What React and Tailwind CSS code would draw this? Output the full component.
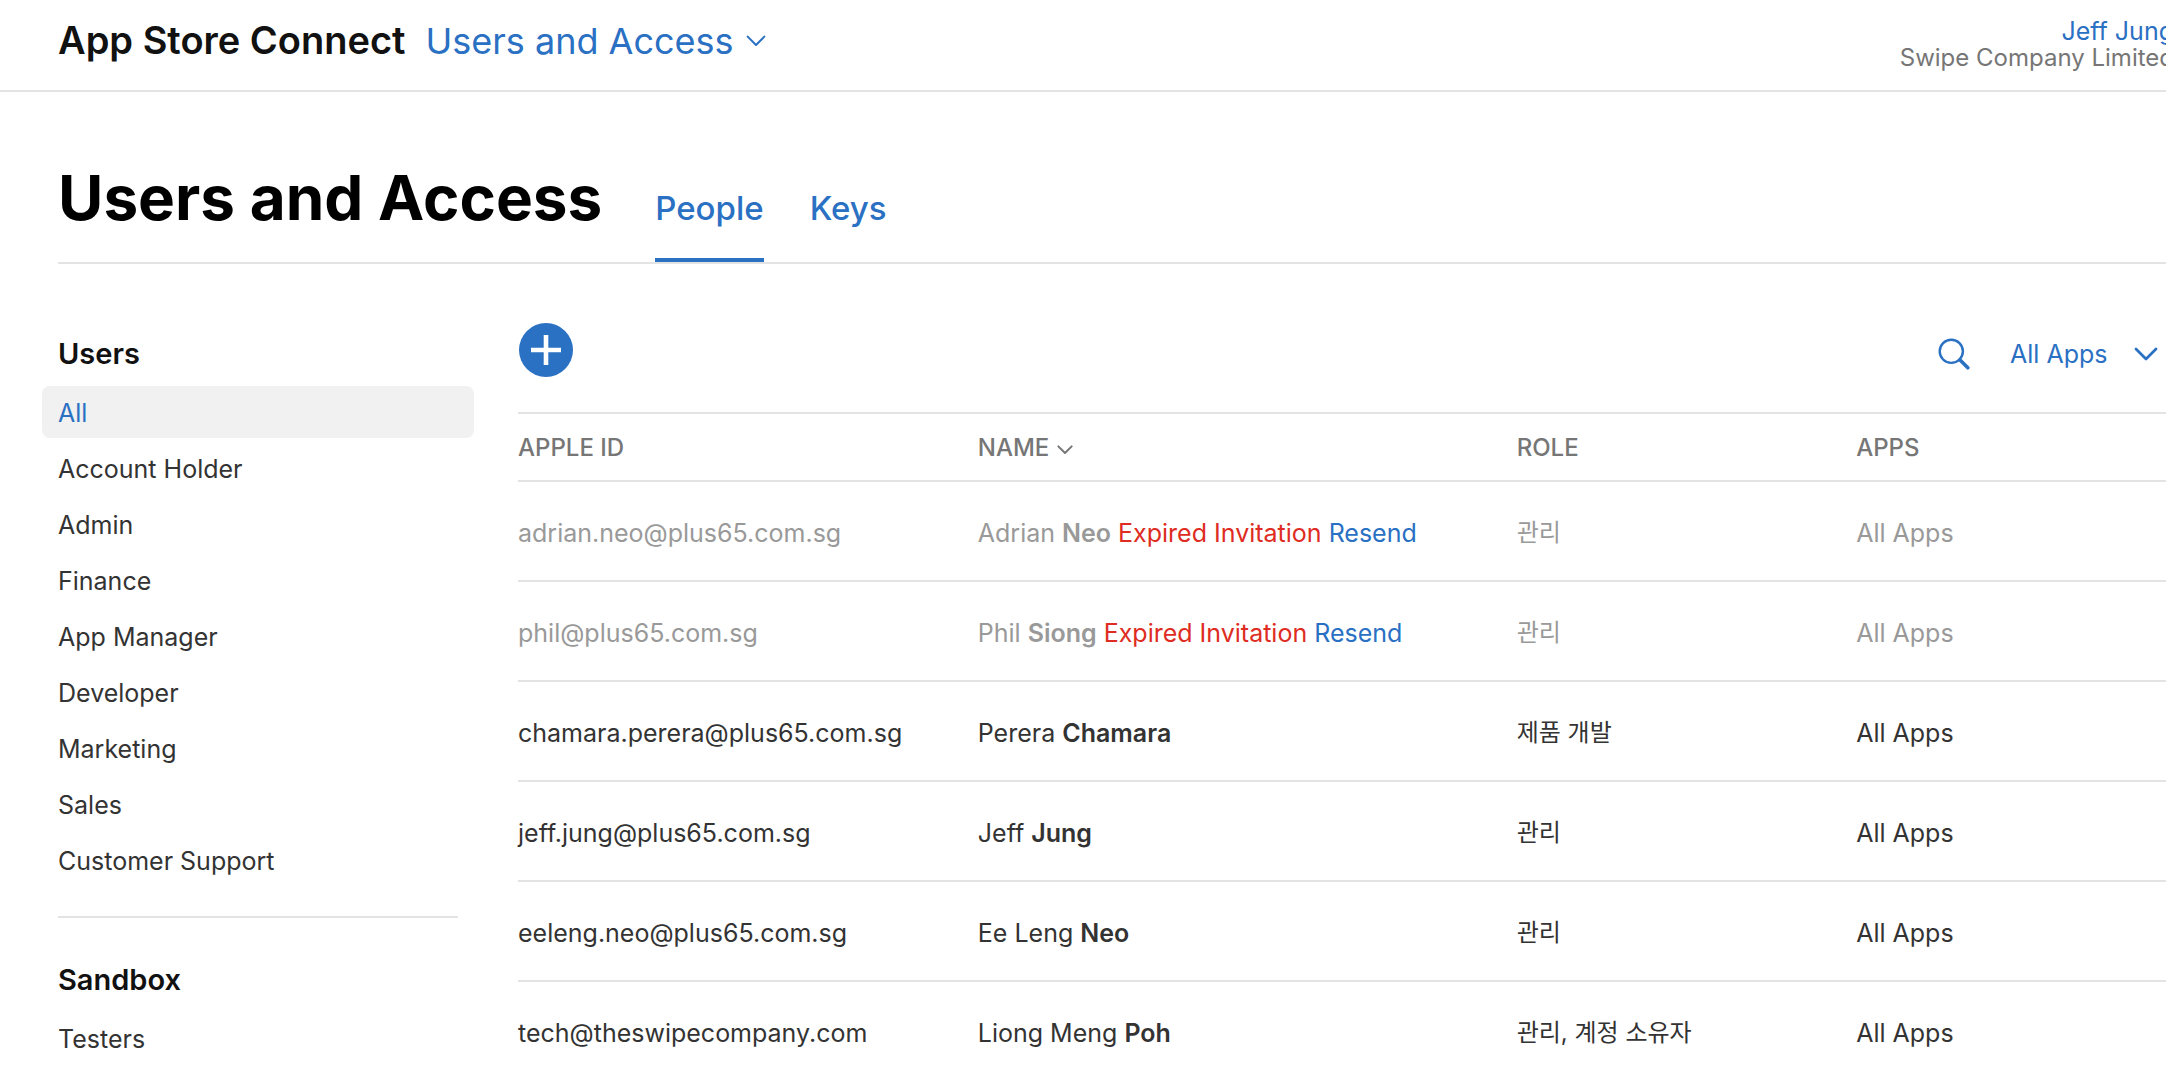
import { useState } from "react";

const roles = ["All", "Account Holder", "Admin", "Finance", "App Manager", "Developer", "Marketing", "Sales", "Customer Support"];

const people = [
  { email: "adrian.neo@plus65.com.sg", first: "Adrian", last: "Neo", expired: true, role: "관리" },
  { email: "phil@plus65.com.sg", first: "Phil", last: "Siong", expired: true, role: "관리" },
  { email: "chamara.perera@plus65.com.sg", first: "Perera", last: "Chamara", role: "제품 개발" },
  { email: "jeff.jung@plus65.com.sg", first: "Jeff", last: "Jung", role: "관리" },
  { email: "eeleng.neo@plus65.com.sg", first: "Ee Leng", last: "Neo", role: "관리" },
  { email: "tech@theswipecompany.com", first: "Liong Meng", last: "Poh", role: "관리, 계정 소유자" },
];

function Chevron({ className, strokeWidth = 2 }) {
  return (
    <svg className={className} viewBox="0 0 24 14" fill="none" stroke="currentColor" strokeWidth={strokeWidth} strokeLinecap="round" strokeLinejoin="round" aria-hidden="true">
      <path d="M2 2l10 10L22 2" />
    </svg>
  );
}

function Header() {
  return (
    <header className="flex h-[92px] items-center justify-between border-b-2 border-[#e3e3e3] pb-2 pl-[58px] whitespace-nowrap">
      <div className="flex items-baseline gap-5 pb-0.5 text-[38px] leading-12">
        <a href="#home" className="font-semibold text-[#111]">App Store Connect</a>
        <button type="button" className="flex items-center gap-3 text-[36px] text-[#2a70c3]">
          Users and Access
          <Chevron className="w-5" strokeWidth={2.4} />
        </button>
      </div>
      <div className="-mr-2 flex flex-col items-end pt-1.5">
        <button type="button" className="text-[25px] leading-7 text-[#2a70c3]">Jeff Jung</button>
        <span className="text-[24px] leading-[26px] text-[#767676]">Swipe Company Limited</span>
      </div>
    </header>
  );
}

function Sidebar({ selected, onSelect }) {
  return (
    <nav className="w-[432px] shrink-0 text-[25px] leading-8 text-[#333]">
      <h2 className="px-4 pt-2.5 pb-3.5 text-[29px] leading-9 font-semibold text-[#111]">Users</h2>
      <ul className="flex flex-col gap-1">
        {roles.map((role) => (
          <li key={role}>
            <button
              type="button"
              onClick={() => onSelect(role)}
              className={`flex h-[52px] w-full items-center rounded-lg px-4 pt-0.5 ${role === selected ? "bg-[#f1f1f1] text-[#2a70c3]" : ""}`}
            >
              {role}
            </button>
          </li>
        ))}
      </ul>
      <hr className="mx-4 mt-[30px] border-t-2 border-[#e3e3e3]" />
      <h2 className="px-4 pt-11 pb-3.5 text-[29px] leading-9 font-semibold text-[#111]">Sandbox</h2>
      <button type="button" className="flex h-[52px] w-full items-center px-4 pt-0.5">Testers</button>
    </nav>
  );
}

function Toolbar() {
  return (
    <div className="flex items-start justify-between pr-2">
      <button type="button" aria-label="Add user" className="ml-px flex size-[54px] items-center justify-center rounded-full bg-[#2a70c3] text-white">
        <svg className="size-[30px]" viewBox="0 0 30 30" stroke="currentColor" strokeWidth="4.6" aria-hidden="true">
          <path d="M15 0v30M0 15h30" />
        </svg>
      </button>
      <div className="mt-2 flex h-[46px] items-center text-[#2a70c3]">
        <button type="button" aria-label="Search" className="mr-10">
          <svg className="size-8" viewBox="0 0 32 32" fill="none" stroke="currentColor" strokeLinecap="round" aria-hidden="true">
            <circle cx="13.3" cy="13.3" r="11.6" strokeWidth="2.4" />
            <path d="M21.8 21.8l8 8" strokeWidth="3.6" />
          </svg>
        </button>
        <select aria-label="Filter by app" className="mr-[26px] appearance-none bg-transparent text-[25px] leading-8">
          <option>All Apps</option>
        </select>
        <Chevron className="w-6" strokeWidth={2.8} />
      </div>
    </div>
  );
}

function PeopleTable() {
  return (
    <table className="mt-[35px] w-full table-fixed border-collapse text-left text-[25px] leading-8 whitespace-nowrap text-[#333]">
      <colgroup>
        <col className="w-[27.9%]" />
        <col className="w-[32.7%]" />
        <col className="w-[20.6%]" />
        <col />
      </colgroup>
      <thead>
        <tr className="h-[68px] border-y-2 border-[#e3e3e3] text-[24px] text-[#767676]">
          <th className="pt-0.5 font-medium">APPLE ID</th>
          <th className="pt-0.5 font-medium">
            <button type="button" className="flex items-center gap-2">
              NAME
              <Chevron className="mt-1 w-4" strokeWidth={3} />
            </button>
          </th>
          <th className="pt-0.5 font-medium">ROLE</th>
          <th className="pt-0.5 font-medium">APPS</th>
        </tr>
      </thead>
      <tbody>
        {people.map((p) => (
          <tr key={p.email} className={`h-[100px] border-b-2 border-[#e3e3e3] ${p.expired ? "text-[#999]" : ""}`}>
            <td className="pt-1">{p.email}</td>
            <td className="pt-1">
              {p.first} <span className="font-semibold">{p.last}</span>
              {p.expired && (
                <>
                  {" "}
                  <span className="text-[#de2c22]">Expired Invitation</span>{" "}
                  <a href="#resend" className="text-[#2a70c3]">Resend</a>
                </>
              )}
            </td>
            <td className="pt-1 text-[24px]">{p.role}</td>
            <td className="pt-1">All Apps</td>
          </tr>
        ))}
      </tbody>
    </table>
  );
}

export default function App() {
  const [selected, setSelected] = useState("All");
  return (
    <div className="h-screen overflow-hidden bg-white font-['Inter','Noto_Sans_CJK_KR',sans-serif]">
      <Header />
      <div className="ml-[58px] flex h-[172px] items-baseline gap-[53px] border-b-2 border-[#e3e3e3] pt-[62px] whitespace-nowrap">
        <h1 className="text-[62px] leading-[88px] font-bold text-black">Users and Access</h1>
        <div role="tablist" className="flex gap-[46px] text-[33px] leading-[52px] font-medium text-[#2a70c3]">
          <button type="button" role="tab" aria-selected="true" className="border-b-4 border-[#2a70c3] pb-6">People</button>
          <button type="button" role="tab" aria-selected="false" className="border-b-4 border-transparent pb-6">Keys</button>
        </div>
      </div>
      <div className="flex gap-11 pl-[42px]">
        <div className="pt-[62px]">
          <Sidebar selected={selected} onSelect={setSelected} />
        </div>
        <main className="min-w-0 flex-1 pt-[59px]">
          <Toolbar />
          <PeopleTable />
        </main>
      </div>
    </div>
  );
}
